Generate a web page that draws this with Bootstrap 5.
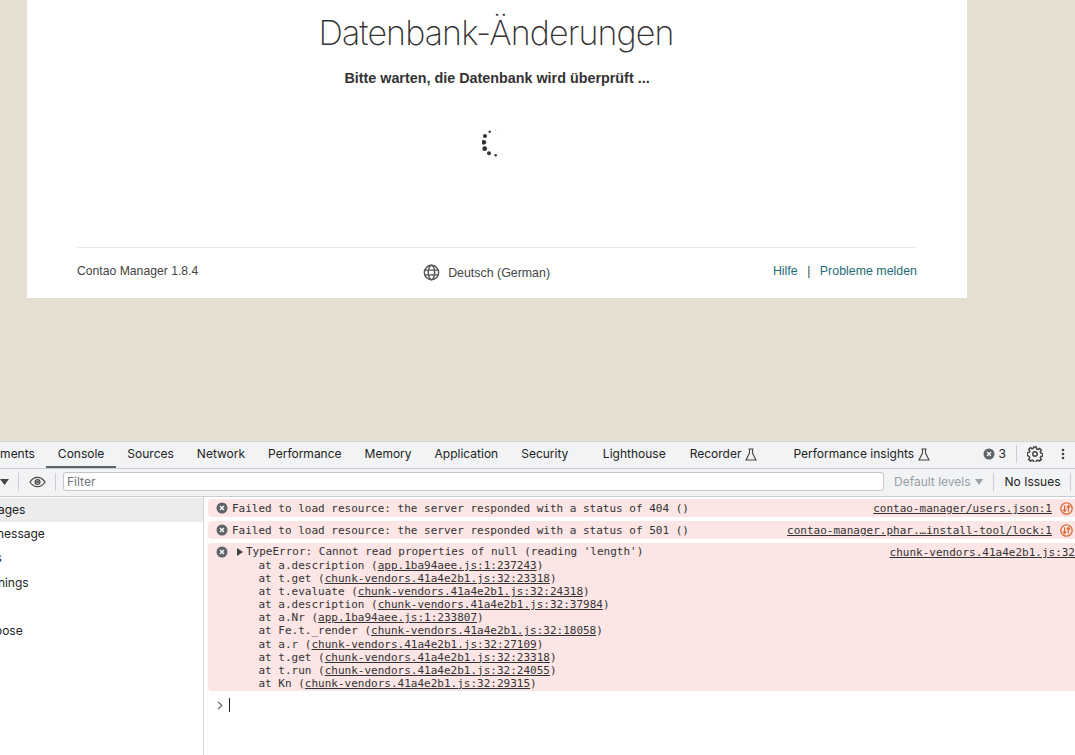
<!DOCTYPE html>
<html lang="de">
<head>
<meta charset="utf-8">
<title>Contao Manager</title>
<link href="https://cdn.jsdelivr.net/npm/bootstrap@5.3.0/dist/css/bootstrap.min.css" rel="stylesheet">
<style>
html,body{height:755px;overflow:hidden}
body{background:#e5dfd1;font-family:"Liberation Sans",Arial,sans-serif;color:#333}
.stage{height:441px;padding:0 108px 0 27px}
.sheet{width:940px;height:298px;background:#fff;padding:0 50px}
.sheet-title{font-family:Inter,sans-serif;font-weight:250;font-size:34px;line-height:42px;color:#333;padding-top:12px;margin:0 0 0 -2px;letter-spacing:-.87px}
.sheet-sub{font-weight:700;font-size:14.35px;line-height:20px;margin:14px 0 0;height:20px}
.spin{display:block;margin:38px auto 0 405px;width:30px;height:34px}
.foot{margin-top:87px;border-top:1px solid #e9e9e9;padding-top:15px;font-size:12.2px;line-height:16px;color:#444}
.foot a{color:#1f6d78;text-decoration:none;font-size:12.4px}
.lang{margin-left:2px;margin-top:1px;font-size:12.4px}
.pipe{margin:0 9.5px}
.tools{height:314px;background:#fff;font-family:Inter,Roboto,sans-serif;font-size:12px;color:#222;overflow:hidden}
.tabbar{height:28px;background:#f1f3f4;border-top:1px solid #d3d5d8;border-bottom:1px solid #cbcdd1;white-space:nowrap}
.tabitem{line-height:24px;padding:0 11.5px;height:26px}
.tabitem.on{border-bottom:2px solid #5f6368;color:#202124}
.tabflex{height:24px}
.tabfirst{margin-left:-28.5px}
.tabgap1{margin-left:11.5px}
.tabrec{margin-left:1px}
.tabgap2{margin-left:13px}
.tabend{height:24px;padding-right:10px}
.statnum{margin-left:4px}
.sep1{margin-left:10px}
.gear{margin:0 0 0 10px}
.vdots{margin-left:18px}
.toolbar{height:28px;background:#f1f3f4;border-bottom:1px solid #cbcdd1;padding-bottom:2px}
.vsep{width:1px;height:18px;background:#cbcdd1;flex:none}
.sep0{margin-left:9px}
.eye{margin:0 9px 0 10px}
.filterbox{width:821px;height:19px;margin-left:7px;border:1px solid #c4c6ca;border-radius:3px;background:#fff;color:#70757a;line-height:17px;padding-left:3px;flex:none}
.lvl{color:#9aa0a6;margin-left:10px;white-space:nowrap}
.lvltri{margin-left:4px;flex:none}
.sep2{margin:0 11px 0 10px}
.noiss{white-space:nowrap}
.side{width:204px;border-right:1px solid #d3d5d8;flex:none;padding-top:1px;height:260px;overflow:hidden}
.sideitem{height:24.2px;line-height:24px;padding-left:0;white-space:nowrap;text-indent:-43px}
.sideact{background:#ececec}
.logs{flex:1 1 auto;padding:2px 0 0 4px;font-family:"DejaVu Sans Mono",monospace;font-size:11px;min-width:0;overflow:hidden}
.rowerr{background:#fbe5e5;border-radius:4px 0 0 4px;margin-bottom:4px;height:18px;line-height:19px;padding-left:24px;color:#333;position:relative}
.rowerr.tall{height:148px;margin-bottom:0;line-height:17px}
.rowerr a{color:#333;text-decoration:underline}
.xdot{position:absolute;left:8px;top:3px}
.head3{height:16px;padding-top:1px}
.stack{margin:0;font:inherit;line-height:13.1px;color:#333;overflow:visible}
.tri{display:inline-block;width:14px}
.src{padding-right:23px;white-space:nowrap}
.warnicon{position:absolute;right:2px;top:3px}
.prompt{height:28px;margin-top:0;padding-left:9px;color:#555}
.caretbar{width:1px;height:14px;background:#222;margin-left:6px}
</style>
</head>
<body>
<div class="stage">
  <div class="sheet text-center">
    <h1 class="sheet-title">Datenbank-Änderungen</h1>
    <p class="sheet-sub">Bitte warten, die Datenbank wird überprüft ...</p>
    <svg class="spin" viewBox="0 0 30 34" aria-hidden="true">
      <g fill="#333">
        <circle cx="7.7" cy="5.7" r="1.2"/><circle cx="3" cy="10" r="2"/><circle cx="1.8" cy="16.3" r="2.4"/><circle cx="2.7" cy="22.7" r="2.4"/><circle cx="7" cy="27.3" r="2"/><circle cx="13.7" cy="29.3" r="1.2"/><circle cx="20" cy="28" r=".5" opacity=".5"/><circle cx="13.7" cy="4.3" r=".5" opacity=".4"/>
      </g>
    </svg>
    <div class="foot d-flex align-items-start justify-content-between">
      <div class="text-start">Contao Manager 1.8.4</div>
      <div class="lang d-flex align-items-center gap-2">
        <svg width="17" height="17" viewBox="0 0 18 18" fill="none" stroke="#555" stroke-width="1.5"><circle cx="9" cy="9" r="7.6"/><ellipse cx="9" cy="9" rx="3.4" ry="7.6"/><path d="M2 6.5h14M2 11.5h14"/></svg>
        <span>Deutsch (German)</span>
      </div>
      <div class="text-end"><a href="#">Hilfe</a><span class="pipe">|</span><a href="#">Probleme melden</a></div>
    </div>
  </div>
</div>
<div class="tools">
  <div class="tabbar d-flex align-items-start">
    <div class="tabitem tabfirst">Elements</div>
    <div class="tabitem on">Console</div>
    <div class="tabitem">Sources</div>
    <div class="tabitem">Network</div>
    <div class="tabitem">Performance</div>
    <div class="tabitem">Memory</div>
    <div class="tabitem">Application</div>
    <div class="tabitem">Security</div>
    <div class="tabitem tabgap1">Lighthouse</div>
    <div class="tabitem tabflex tabrec d-flex align-items-center gap-1">Recorder
      <svg width="12" height="13" viewBox="0 0 12 13" fill="none" stroke="#444" stroke-width="1.1"><path d="M3.5 1h5M4.5 1v4L1 12h10L7.5 5V1"/></svg></div>
    <div class="tabitem tabflex d-flex align-items-center gap-1 tabgap2">Performance insights
      <svg width="12" height="13" viewBox="0 0 12 13" fill="none" stroke="#444" stroke-width="1.1"><path d="M3.5 1h5M4.5 1v4L1 12h10L7.5 5V1"/></svg></div>
    <div class="tabend d-flex align-items-center ms-auto">
      <svg width="12" height="12" viewBox="0 0 12 12"><circle cx="6" cy="6" r="5.5" fill="#5f6368"/><path d="M4 4l4 4M8 4l-4 4" stroke="#fff" stroke-width="1.2"/></svg>
      <span class="statnum">3</span>
      <span class="vsep sep1"></span>
      <svg class="gear" width="16" height="16" viewBox="0 0 16 16" fill="none" stroke="#444" stroke-width="1.5"><circle cx="8" cy="8" r="2.2"/><path d="M6.8 1h2.4l.4 1.9 1.4.6 1.6-1 1.7 1.7-1 1.6.6 1.4 1.9.4v2.4l-1.9.4-.6 1.4 1 1.6-1.7 1.7-1.6-1-1.4.6-.4 1.9H6.8l-.4-1.9-1.4-.6-1.6 1-1.7-1.7 1-1.6-.6-1.4L.2 9.2V6.8l1.9-.4.6-1.4-1-1.6 1.7-1.7 1.6 1 1.4-.6z"/></svg>
      <svg class="vdots" width="4" height="12" viewBox="0 0 4 12" fill="#444"><circle cx="2" cy="2" r="1.3"/><circle cx="2" cy="6" r="1.3"/><circle cx="2" cy="10" r="1.3"/></svg>
    </div>
  </div>
  <div class="toolbar d-flex align-items-center">
    <svg width="9" height="6" viewBox="0 0 9 6" class="flex-shrink-0"><path d="M0 0h9L4.5 6z" fill="#444"/></svg>
    <span class="vsep sep0"></span>
    <svg class="eye flex-shrink-0" width="17" height="12" viewBox="0 0 18 12" fill="none" stroke="#444" stroke-width="1.3"><path d="M1 6c2-3 5-5 8-5s6 2 8 5c-2 3-5 5-8 5S3 9 1 6z"/><circle cx="9" cy="6" r="2.6"/><circle cx="9" cy="6" r=".8" fill="#444"/></svg>
    <span class="vsep"></span>
    <div class="filterbox">Filter</div>
    <span class="lvl">Default levels</span>
    <svg class="lvltri" width="8" height="6" viewBox="0 0 8 6"><path d="M0 0h8L4 6z" fill="#9aa0a6"/></svg>
    <span class="vsep sep2"></span>
    <span class="noiss">No Issues</span>
    <span class="vsep sep1"></span>
  </div>
  <div class="d-flex">
    <div class="side">
      <div class="sideitem sideact">3 messages</div>
      <div class="sideitem">1 user message</div>
      <div class="sideitem">3 errors</div>
      <div class="sideitem">No warnings</div>
      <div class="sideitem">No info</div>
      <div class="sideitem">No verbose</div>
    </div>
    <div class="logs">
      <div class="rowerr d-flex justify-content-between">
        <svg class="xdot" width="12" height="12" viewBox="0 0 12 12"><circle cx="6" cy="6" r="5.5" fill="#5f6368"/><path d="M4 4l4 4M8 4l-4 4" stroke="#fff" stroke-width="1.2"/></svg>
        <span>Failed to load resource: the server responded with a status of 404 ()</span>
        <a class="src" href="#">contao-manager/users.json:1</a>
        <svg class="warnicon" width="13" height="13" viewBox="0 0 13 13" fill="none" stroke="#dd6b35" stroke-width="1.3"><circle cx="6.5" cy="6.5" r="5.7"/><path d="M4.6 3.5V9.4M3 7.6L4.6 9.4L6.2 7.6M8.4 9.5V3.6M6.8 5.4L8.4 3.6L10 5.4"/></svg>
      </div>
      <div class="rowerr d-flex justify-content-between">
        <svg class="xdot" width="12" height="12" viewBox="0 0 12 12"><circle cx="6" cy="6" r="5.5" fill="#5f6368"/><path d="M4 4l4 4M8 4l-4 4" stroke="#fff" stroke-width="1.2"/></svg>
        <span>Failed to load resource: the server responded with a status of 501 ()</span>
        <a class="src" href="#">contao-manager.phar.…install-tool/lock:1</a>
        <svg class="warnicon" width="13" height="13" viewBox="0 0 13 13" fill="none" stroke="#dd6b35" stroke-width="1.3"><circle cx="6.5" cy="6.5" r="5.7"/><path d="M4.6 3.5V9.4M3 7.6L4.6 9.4L6.2 7.6M8.4 9.5V3.6M6.8 5.4L8.4 3.6L10 5.4"/></svg>
      </div>
      <div class="rowerr tall">
        <svg class="xdot" width="12" height="12" viewBox="0 0 12 12"><circle cx="6" cy="6" r="5.5" fill="#5f6368"/><path d="M4 4l4 4M8 4l-4 4" stroke="#fff" stroke-width="1.2"/></svg>
        <div class="head3 d-flex justify-content-between">
          <span class="d-flex align-items-center"><svg class="tri" width="14" height="8" viewBox="0 0 14 8"><path d="M5 0l6 4-6 4z" fill="#444"/></svg>TypeError: Cannot read properties of null (reading 'length')</span>
          <a class="text-nowrap" href="#">chunk-vendors.41a4e2b1.js:32</a>
        </div>
<pre class="stack">    at a.description (<a href="#">app.1ba94aee.js:1:237243</a>)
    at t.get (<a href="#">chunk-vendors.41a4e2b1.js:32:23318</a>)
    at t.evaluate (<a href="#">chunk-vendors.41a4e2b1.js:32:24318</a>)
    at a.description (<a href="#">chunk-vendors.41a4e2b1.js:32:37984</a>)
    at a.Nr (<a href="#">app.1ba94aee.js:1:233807</a>)
    at Fe.t._render (<a href="#">chunk-vendors.41a4e2b1.js:32:18058</a>)
    at a.r (<a href="#">chunk-vendors.41a4e2b1.js:32:27109</a>)
    at t.get (<a href="#">chunk-vendors.41a4e2b1.js:32:23318</a>)
    at t.run (<a href="#">chunk-vendors.41a4e2b1.js:32:24055</a>)
    at Kn (<a href="#">chunk-vendors.41a4e2b1.js:32:29315</a>)</pre>
      </div>
      <div class="prompt d-flex align-items-center">
        <svg width="6" height="9" viewBox="0 0 6 9" fill="none" stroke="#666" stroke-width="1.1"><path d="M1 1l4 3.5L1 8"/></svg>
        <span class="caretbar"></span>
      </div>
    </div>
  </div>
</div>
<script src="https://cdn.jsdelivr.net/npm/bootstrap@5.3.0/dist/js/bootstrap.bundle.min.js"></script>
</body>
</html>
